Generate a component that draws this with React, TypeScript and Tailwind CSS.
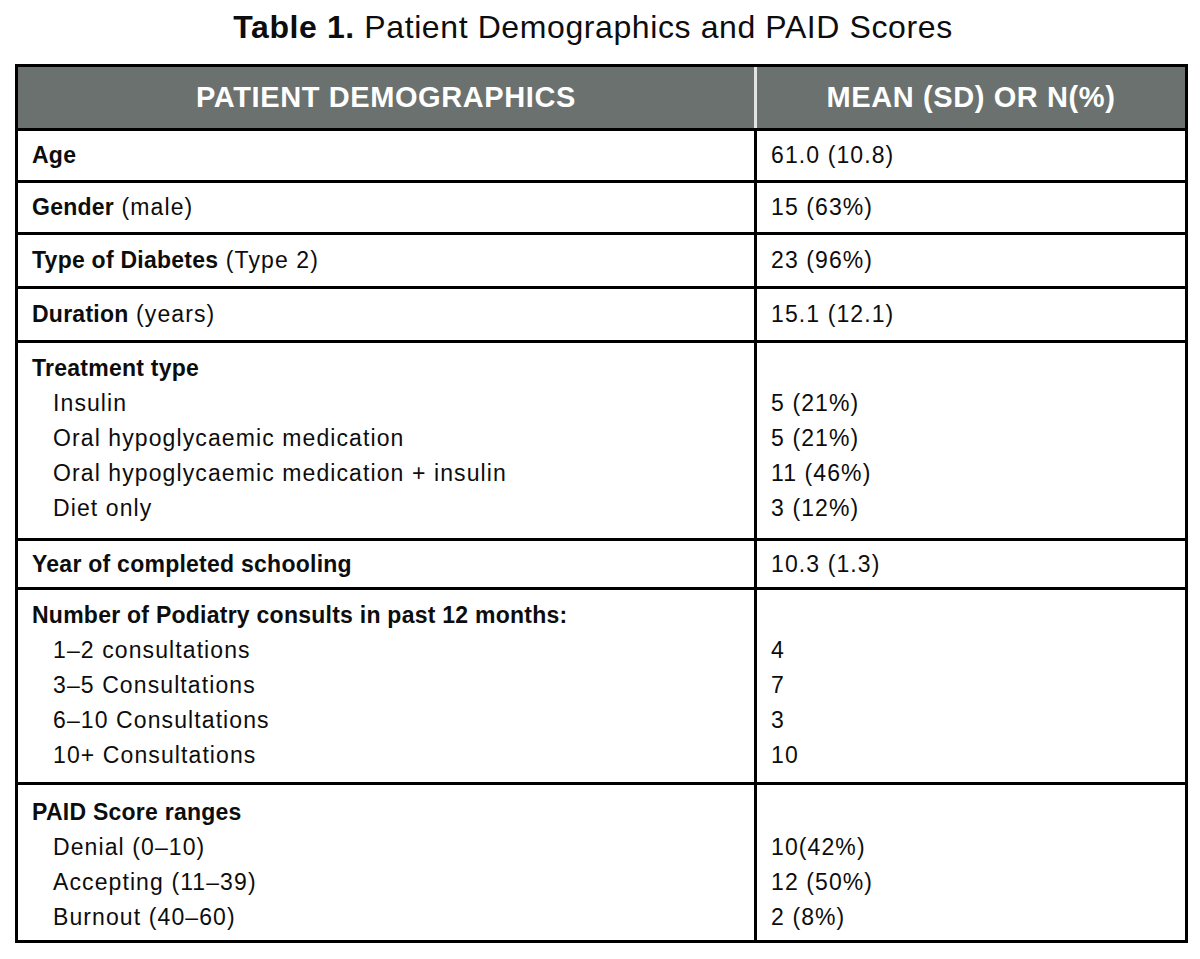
import React from "react"

type Row = {
  label: React.ReactNode
  value?: string
  items?: { label: string; value: string }[]
  h: string
  pt?: string
}

const rows: Row[] = [
  { label: <><b className="font-bold tracking-[0.25px]">Age</b></>, value: "61.0 (10.8)", h: "h-[52px]" },
  { label: <><b className="font-bold tracking-[0.25px]">Gender</b> (male)</>, value: "15 (63%)", h: "h-[52px]" },
  { label: <><b className="font-bold tracking-[0.25px]">Type of Diabetes</b> (Type 2)</>, value: "23 (96%)", h: "h-[54px]" },
  { label: <><b className="font-bold tracking-[0.25px]">Duration</b> (years)</>, value: "15.1 (12.1)", h: "h-[54px]" },
  {
    label: <b className="font-bold tracking-[0.25px]">Treatment type</b>,
    items: [
      { label: "Insulin", value: "5 (21%)" },
      { label: "Oral hypoglycaemic medication", value: "5 (21%)" },
      { label: "Oral hypoglycaemic medication + insulin", value: "11 (46%)" },
      { label: "Diet only", value: "3 (12%)" },
    ],
    h: "h-[198px]",
    pt: "pt-[8px]",
  },
  { label: <b className="font-bold tracking-[0.25px]">Year of completed schooling</b>, value: "10.3 (1.3)", h: "h-[49px]" },
  {
    label: <b className="font-bold tracking-[0.25px]">Number of Podiatry consults in past 12 months:</b>,
    items: [
      { label: "1–2 consultations", value: "4" },
      { label: "3–5 Consultations", value: "7" },
      { label: "6–10 Consultations", value: "3" },
      { label: "10+ Consultations", value: "10" },
    ],
    h: "h-[195px]",
    pt: "pt-[8px]",
  },
  {
    label: <b className="font-bold tracking-[0.25px]">PAID Score ranges</b>,
    items: [
      { label: "Denial (0–10)", value: "10(42%)" },
      { label: "Accepting (11–39)", value: "12 (50%)" },
      { label: "Burnout (40–60)", value: "2 (8%)" },
    ],
    h: "h-[158px]",
    pt: "pt-[10px]",
  },
]

export default function App() {
  return (
    <div className="w-[1200px] h-[959px] bg-white text-[#0d0d0d] font-['Liberation_Sans',Arial,sans-serif]">
      <div className="h-[64px] pt-[9px] pr-[14px] text-center text-[32px] leading-[36px] tracking-[0.6px]">
        <span className="font-bold">Table 1.</span> Patient Demographics and PAID Scores
      </div>

      <div className="ml-[15px] w-[1173px] border-[3px] border-black">
        <div className="flex h-[61px] bg-[#6b716e] text-white font-bold text-[29px] tracking-[0.6px]">
          <div className="w-[736px] flex items-center justify-center">PATIENT DEMOGRAPHICS</div>
          <div className="flex-1 flex items-center justify-center border-l-[3px] border-[#e4e4e4]">
            MEAN (SD) OR N(%)
          </div>
        </div>

        {rows.map((row, i) => (
          <div
            key={i}
            className={`flex border-t-[3px] border-black text-[23px] leading-[35px] tracking-[1.1px] ${row.h}`}
          >
            {row.items ? (
              <>
                <div className={`w-[736px] pl-[14px] ${row.pt}`}>
                  <div>{row.label}</div>
                  {row.items.map((it) => (
                    <div key={it.label} className="pl-[21px]">{it.label}</div>
                  ))}
                </div>
                <div className={`flex-1 pl-[14px] border-l-[3px] border-black ${row.pt}`}>
                  <div>&nbsp;</div>
                  {row.items.map((it) => (
                    <div key={it.label}>{it.value}</div>
                  ))}
                </div>
              </>
            ) : (
              <>
                <div className="w-[736px] pl-[14px] flex items-center">
                  <span>{row.label}</span>
                </div>
                <div className="flex-1 pl-[14px] flex items-center border-l-[3px] border-black">
                  {row.value}
                </div>
              </>
            )}
          </div>
        ))}
      </div>
    </div>
  )
}
